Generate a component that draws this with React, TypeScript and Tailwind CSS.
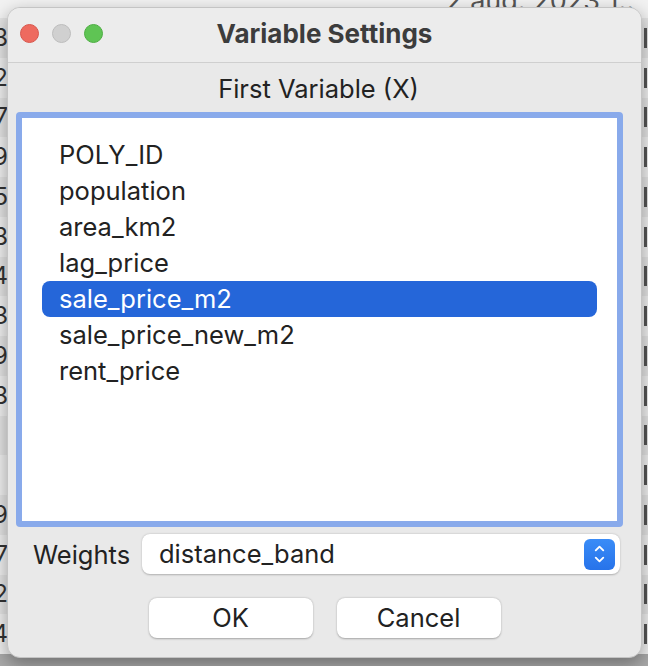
import { ChevronDown, ChevronUp } from 'lucide-react';

const variables = [
  'POLY_ID',
  'population',
  'area_km2',
  'lag_price',
  'sale_price_m2',
  'sale_price_new_m2',
  'rent_price',
];

const selected = 'sale_price_m2';

// Digits from the spreadsheet window behind the dialog (cut off at the edge)
const backRows = ['8', '2', '7', '9', '5', '8', '4', '3', '9', '8', '', '', '9', '7', '2', '4'];

function Backdrop() {
  return (
    <div className="absolute inset-0 flex flex-col bg-[#e6e6e6]">
      <div className="h-[18px] flex justify-end overflow-hidden bg-[#f2f2f2]">
        <span className="mr-[14px] -mt-[13px] text-[27px] text-[#555] leading-none">2 aug. 2023 1..</span>
      </div>
      {backRows.map((d, i) => (
        <div
          key={i}
          className={`h-[39.75px] shrink-0 flex items-center justify-between ${i % 2 === 0 ? 'bg-[#e4e4e4]' : 'bg-[#efefef]'}`}
        >
          <span className="w-[8px] overflow-hidden flex justify-end text-[24px] text-[#333] leading-none">
            {d}
          </span>
          <span className="w-[4px] h-[20px] border-l-[3px] border-[#555]" />
        </div>
      ))}
      <div className="flex-1 bg-[#a9a9a9]" />
    </div>
  );
}

function TrafficLights() {
  return (
    <div className="absolute left-[12px] top-[16px] flex gap-[13px]">
      <span className="w-[19px] h-[19px] rounded-full bg-[#ee6a5f] border border-[#d8574d]" />
      <span className="w-[19px] h-[19px] rounded-full bg-[#d0d0d0] border border-[#bdbdbd]" />
      <span className="w-[19px] h-[19px] rounded-full bg-[#5fc454] border border-[#4eae43]" />
    </div>
  );
}

export default function App() {
  return (
    <div className="relative w-[648px] h-[666px] overflow-hidden font-['Inter','Liberation_Sans',Arial,sans-serif]">
      <Backdrop />

      {/* Dialog window */}
      <div className="absolute left-[7px] top-[7px] w-[635px] h-[651px] rounded-[13px] bg-[#e9e9e9] border border-[#c4c4c4] shadow-[0_6px_18px_rgba(0,0,0,0.35)] flex flex-col overflow-hidden">
        {/* Title bar */}
        <div className="relative h-[55px] shrink-0 bg-[#ececec] border-b border-[#cfcfcf] flex items-center justify-center">
          <TrafficLights />
          <span className="text-[26px] font-bold text-[#3c3c3c] -mt-[4px]">Variable Settings</span>
        </div>

        <div className="flex flex-col">
          <div className="h-[49px] flex items-center justify-center text-[25.5px] text-[#222] -ml-[12px] mt-[2px]">
            First Variable (X)
          </div>

          {/* Variable list with focus ring */}
          <div className="h-[415px] rounded-[4px] bg-[#89aaeb] p-[6px] ml-[8px] mr-[18px] -mt-[2px]">
            <div className="h-full bg-white pt-[19px] px-[20px]">
              {variables.map((v) => (
                <div
                  key={v}
                  className={`h-[36px] flex items-center pl-[17px] rounded-[8px] text-[25.5px] ${
                    v === selected ? 'bg-[#2566d9] text-white' : 'text-[#222]'
                  }`}
                >
                  {v}
                </div>
              ))}
            </div>
          </div>

          {/* Weights */}
          <div className="flex items-center mt-[7px] h-[40px] mr-[21px]">
            <span className="w-[134px] pl-[25px] text-[25.5px] text-[#222] mt-[3px]">Weights</span>
            <div className="flex-1 h-[40px] rounded-[8px] bg-white shadow-[0_0.5px_2px_rgba(0,0,0,0.25)] flex items-center justify-between pl-[17px] pr-[5px]">
              <span className="text-[25.5px] text-[#222]">distance_band</span>
              <span className="w-[31px] h-[31px] rounded-[6px] bg-gradient-to-b from-[#3a8cf7] to-[#2773ea] flex flex-col items-center justify-center text-white">
                <ChevronUp size={15} strokeWidth={3} className="-mb-[2px]" />
                <ChevronDown size={15} strokeWidth={3} className="-mt-[2px]" />
              </span>
            </div>
          </div>

          {/* Buttons */}
          <div className="flex justify-center gap-[24px] mt-[24px]">
            <button className="w-[164px] h-[40px] rounded-[8px] bg-white shadow-[0_0.5px_2px_rgba(0,0,0,0.3)] text-[25.5px] text-[#222]">
              OK
            </button>
            <button className="w-[164px] h-[40px] rounded-[8px] bg-white shadow-[0_0.5px_2px_rgba(0,0,0,0.3)] text-[25.5px] text-[#222]">
              Cancel
            </button>
          </div>
        </div>
      </div>
    </div>
  );
}
